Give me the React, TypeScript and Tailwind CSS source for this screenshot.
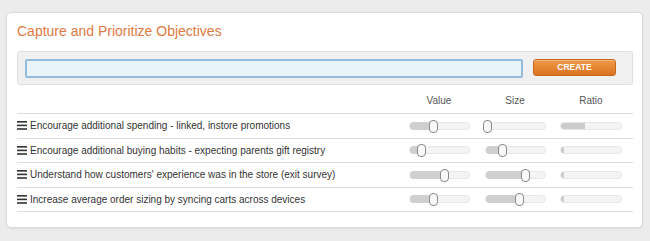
import React from 'react';

interface Objective {
  id: number;
  text: string;
  value: number;
  size: number;
  ratio: number;
}

const objectives: Objective[] = [
  { id: 1, text: 'Encourage additional spending - linked, instore promotions', value: 0.39, size: 0.03, ratio: 0.4 },
  { id: 2, text: 'Encourage additional buying habits - expecting parents gift registry', value: 0.19, size: 0.28, ratio: 0.05 },
  { id: 3, text: "Understand how customers' experience was in the store (exit survey)", value: 0.59, size: 0.67, ratio: 0.05 },
  { id: 4, text: 'Increase average order sizing by syncing carts across devices', value: 0.39, size: 0.57, ratio: 0.05 },
];

const Slider = ({ pos }: { pos: number }) => (
  <div className="relative w-[61px] h-[8px] rounded-full bg-[#f4f4f4] border border-[#e6e6e6]">
    <div className="absolute left-0 top-[-1px] h-[8px] rounded-l-full bg-[#cfcfcf]" style={{ width: `${pos * 100}%` }} />
    <div
      className="absolute top-[-3px] w-[9px] h-[13px] -ml-[4px] rounded-[4px] bg-[#f9f9f9] border border-[#8a8a8a]"
      style={{ left: `${pos * 100}%` }}
    />
  </div>
);

const Bar = ({ pos }: { pos: number }) => (
  <div className="relative w-[62px] h-[8px] rounded-full bg-[#f4f4f4] border border-[#e6e6e6] overflow-hidden">
    <div className="h-full bg-[#cbcbcb]" style={{ width: `${pos * 100}%` }} />
  </div>
);

const MenuIcon = () => (
  <svg width="10" height="9" viewBox="0 0 10 9" className="mr-[3px] shrink-0">
    <rect x="0" y="0" width="10" height="1.6" fill="#333" />
    <rect x="0" y="3.6" width="10" height="1.6" fill="#333" />
    <rect x="0" y="7.2" width="10" height="1.6" fill="#333" />
  </svg>
);

export default function App() {
  return (
    <div className="w-[650px] h-[241px] bg-[#ececec] pt-[12px] px-[6px] font-['Liberation_Sans',Arial,sans-serif]">
      <div className="w-[637px] h-[216px] bg-white border border-[#dcdcdc] rounded-[5px] shadow-[0_1px_2px_rgba(0,0,0,0.08)] pt-[9px] pl-[10px] pr-[9px]">
        <h1 className="text-[14px] leading-[18px] text-[#e07a44] mb-[11px]">Capture and Prioritize Objectives</h1>

        <div className="flex items-start h-[34px] bg-[#f0f0f0] border border-[#dedede] rounded-[3px] pl-[7px] pr-[15px] pt-[7px]">
          <div className="w-[498px] h-[19px] bg-[#e9f3fa] border-2 border-[#93bbdf] rounded-[2px]" />
          <button className="ml-[10px] w-[83px] h-[17px] rounded-[3px] bg-gradient-to-b from-[#f19a45] to-[#d9731f] border border-[#c9681d] text-white text-[8.5px] font-bold leading-none shadow-[inset_0_1px_0_rgba(255,255,255,0.3)]">
            CREATE
          </button>
        </div>

        <div className="flex items-end h-[29px] pb-[5px] pr-[4px] border-b border-[#dcdcdc] text-[10px] text-[#555]">
          <div className="flex-1" />
          <div className="w-[76px] text-center">Value</div>
          <div className="w-[76px] text-center">Size</div>
          <div className="w-[76px] text-center">Ratio</div>
        </div>

        {objectives.map((o) => (
          <div key={o.id} className="flex items-center h-[24.5px] pr-[4px] border-b border-[#dcdcdc] text-[10px] text-[#333]">
            <div className="flex-1 flex items-center">
              <MenuIcon />
              <span>{o.text}</span>
            </div>
            <div className="w-[76px] flex justify-center"><Slider pos={o.value} /></div>
            <div className="w-[76px] flex justify-center"><Slider pos={o.size} /></div>
            <div className="w-[76px] flex justify-center"><Bar pos={o.ratio} /></div>
          </div>
        ))}
      </div>
    </div>
  );
}
